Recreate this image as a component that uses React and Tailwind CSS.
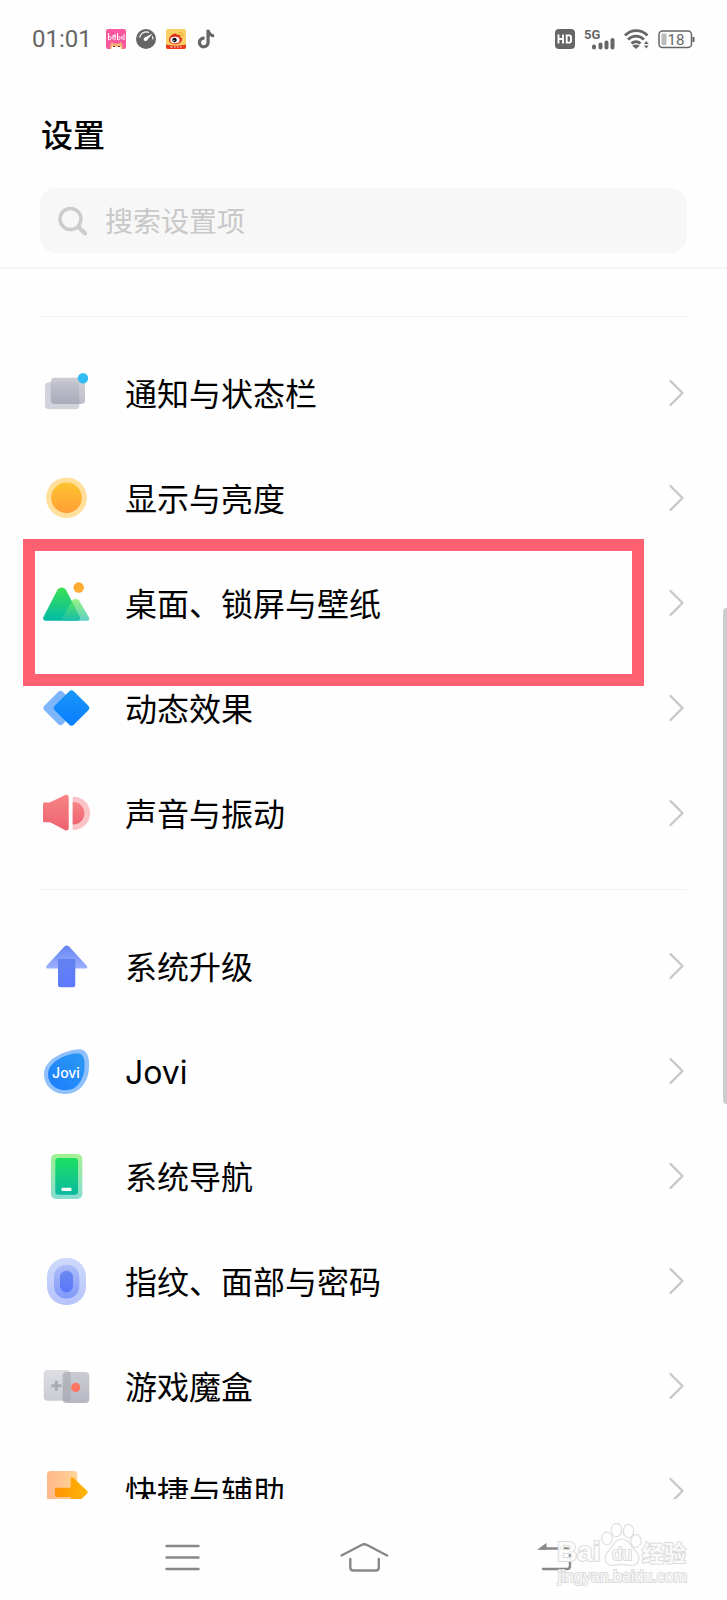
import { IoLogoTiktok } from "react-icons/io5";

function NoticeIcon() {
  return (
    <svg viewBox="0 0 52 53" className="h-[53px] w-[52px]" aria-hidden="true">
      <defs>
        <linearGradient id="notice" x1="0" y1="0" x2="0" y2="1">
          <stop offset="0" stopColor="#c6c6d0" />
          <stop offset="1" stopColor="#a6a7b6" />
        </linearGradient>
      </defs>
      <rect x="5" y="15.3" width="34.3" height="27" rx="4" fill="#d3d3dc" />
      <rect x="10.7" y="10.7" width="34.3" height="26.3" rx="4" fill="url(#notice)" opacity="0.9" />
      <path d="M39.3 19v18H41a4 4 0 0 0 4-4V14.7a4 4 0 0 0-4-4h-3.5a4 4 0 0 1 1.8 4z" fill="#fff" opacity="0.18" />
      <circle cx="43" cy="11.3" r="5.2" fill="#33bdf5" />
    </svg>
  );
}

function DisplayIcon() {
  return (
    <svg viewBox="0 0 52 53" className="h-[53px] w-[52px]" aria-hidden="true">
      <defs>
        <linearGradient id="sun" x1="0" y1="0" x2="0" y2="1">
          <stop offset="0" stopColor="#ffc42e" />
          <stop offset="1" stopColor="#ff9f37" />
        </linearGradient>
      </defs>
      <circle cx="26.5" cy="25.7" r="20.3" fill="#ffdf9a" />
      <circle cx="26.5" cy="25.7" r="15.3" fill="url(#sun)" />
    </svg>
  );
}

function WallpaperIcon() {
  return (
    <svg viewBox="0 0 52 53" className="h-[53px] w-[52px]" aria-hidden="true">
      <defs>
        <linearGradient id="hillBig" x1="0" y1="0" x2="0" y2="1">
          <stop offset="0" stopColor="#3be052" />
          <stop offset="1" stopColor="#00b9a8" />
        </linearGradient>
        <linearGradient id="hillSmall" x1="0" y1="0" x2="0" y2="1">
          <stop offset="0" stopColor="#6af04e" />
          <stop offset="1" stopColor="#22bfb2" />
        </linearGradient>
      </defs>
      <path
        d="M17.2 13.2c2-3.6 7-3.6 9 0l13.5 26.6c1 2-.2 4-2.3 4H5.8c-2.1 0-3.3-2-2.3-4z"
        fill="url(#hillBig)"
      />
      <path
        d="M31.7 24.4c1.9-3.2 6.2-3.2 8 0l9.3 16c.9 1.6-.1 3.4-2 3.4H24.5c-1.9 0-2.9-1.8-2-3.4z"
        fill="url(#hillSmall)"
        opacity="0.72"
      />
      <circle cx="38.7" cy="10.5" r="5.2" fill="#ffac33" />
    </svg>
  );
}

function MotionIcon() {
  return (
    <svg viewBox="0 0 52 53" className="h-[53px] w-[52px]" aria-hidden="true">
      <defs>
        <linearGradient id="motion" x1="0" y1="0" x2="1" y2="1">
          <stop offset="0" stopColor="#1a97f8" />
          <stop offset="1" stopColor="#087dff" />
        </linearGradient>
      </defs>
      <rect x="7.5" y="13" width="26" height="26" rx="3.5" transform="rotate(45 20.5 26)" fill="#7db5fa" />
      <rect x="18" y="12.5" width="27" height="27" rx="3.5" transform="rotate(45 31.5 26)" fill="url(#motion)" />
    </svg>
  );
}

function SoundIcon() {
  return (
    <svg viewBox="0 0 52 53" className="h-[53px] w-[52px]" aria-hidden="true">
      <defs>
        <linearGradient id="sound" x1="0" y1="0" x2="0" y2="1">
          <stop offset="0" stopColor="#f58585" />
          <stop offset="1" stopColor="#ee6170" />
        </linearGradient>
      </defs>
      <path
        d="M4.5 15.6h3.2c1 0 2-.2 2.9-.7l14.6-6.8c1.7-.8 3.5.2 3.5 2v31.2c0 1.8-1.8 2.8-3.5 2L11.6 36c-.9-.5-1.9-.7-2.9-.7H4.5c-.9 0-1.5-.6-1.5-1.5V17.1c0-.9.6-1.5 1.5-1.5z"
        fill="url(#sound)"
      />
      <path d="M32.7 9.7h.8a16.6 16.6 0 0 1 0 33.3h-.8z" fill="#fcc3c6" />
      <path d="M32.7 15h.4a11.2 11.2 0 0 1 0 22.5h-.4z" fill="url(#sound)" />
    </svg>
  );
}

function UpgradeIcon() {
  return (
    <svg viewBox="0 0 52 53" className="h-[53px] w-[52px]" aria-hidden="true">
      <defs>
        <linearGradient id="upHead" x1="0" y1="0" x2="0" y2="1">
          <stop offset="0" stopColor="#6385f1" />
          <stop offset="1" stopColor="#9cafff" />
        </linearGradient>
        <linearGradient id="upStem" x1="0" y1="0" x2="0" y2="1">
          <stop offset="0" stopColor="#6283ef" />
          <stop offset="1" stopColor="#5d79ff" />
        </linearGradient>
      </defs>
      <path
        d="M24.6 6.3c1.2-1.2 3-1.2 4.2 0l18 19.5c.9 1.1.4 2.7-1 2.7H7.6c-1.4 0-1.9-1.6-1-2.7z"
        fill="url(#upHead)"
      />
      <path d="M18 19h17.3v25.8a2.5 2.5 0 0 1-2.5 2.5H20.5a2.5 2.5 0 0 1-2.5-2.5z" fill="url(#upStem)" />
    </svg>
  );
}

function JoviIcon() {
  return (
    <svg viewBox="0 0 52 53" className="h-[53px] w-[52px]" aria-hidden="true">
      <defs>
        <linearGradient id="jovi" x1="1" y1="0" x2="0" y2="1">
          <stop offset="0" stopColor="#2c9af2" />
          <stop offset="1" stopColor="#1a7dff" />
        </linearGradient>
      </defs>
      <path
        d="M38 4.2C44.5 3.5 48 8 48.8 15c.7 6.5.2 14.5-2.8 20.5C41.5 44.500 33.500 49 25.500 49 13 49 4 40.500 4 29 4 15.500 22 5.800 38 4.200z"
        fill="#8fc0fb"
      />
      <path
        d="M36.5 8.2C41.5 7.7 43.8 11 44.4 16.500c.6 5.500.2 12-2.400 17C38.500 41.500 32.500 45.300 25.500 45.300 15.500 45.300 8 38.500 8 29.500 8 18 23 9.500 36.500 8.200z"
        fill="url(#jovi)"
      />
      <text
        x="26"
        y="33"
        textAnchor="middle"
        className="font-[family-name:Inter,sans-serif] text-[14px] font-medium"
        fill="#fff"
      >
        Jovi
      </text>
    </svg>
  );
}

function NavigationIcon() {
  return (
    <svg viewBox="0 0 52 53" className="h-[53px] w-[52px]" aria-hidden="true">
      <defs>
        <linearGradient id="phoneOut" x1="0" y1="0" x2="0" y2="1">
          <stop offset="0" stopColor="#a4f091" />
          <stop offset="1" stopColor="#85dcd2" />
        </linearGradient>
        <linearGradient id="phoneIn" x1="0" y1="0" x2="0" y2="1">
          <stop offset="0" stopColor="#1ce062" />
          <stop offset="1" stopColor="#0bb9a0" />
        </linearGradient>
      </defs>
      <rect x="11" y="4" width="31.3" height="45" rx="5" fill="url(#phoneOut)" />
      <rect x="15.3" y="8" width="22.7" height="36.7" rx="3" fill="url(#phoneIn)" />
      <rect x="21.5" y="37.7" width="10" height="3.3" rx="1" fill="#fff" />
    </svg>
  );
}

function FingerprintIcon() {
  return (
    <svg viewBox="0 0 52 53" className="h-[53px] w-[52px]" aria-hidden="true">
      <defs>
        <linearGradient id="fingerOut" x1="0" y1="0" x2="0" y2="1">
          <stop offset="0" stopColor="#cfd9fb" />
          <stop offset="1" stopColor="#b6c3fb" />
        </linearGradient>
        <linearGradient id="fingerMid" x1="0" y1="0" x2="0" y2="1">
          <stop offset="0" stopColor="#adbdf8" />
          <stop offset="1" stopColor="#829afa" />
        </linearGradient>
        <linearGradient id="fingerIn" x1="0" y1="0" x2="0" y2="1">
          <stop offset="0" stopColor="#6c89f0" />
          <stop offset="1" stopColor="#5877fb" />
        </linearGradient>
      </defs>
      <rect x="7" y="3" width="39" height="47" rx="18.5" fill="url(#fingerOut)" />
      <rect x="14" y="9.7" width="25.3" height="33.7" rx="12" fill="url(#fingerMid)" />
      <rect x="20" y="15.7" width="13" height="21.7" rx="6.5" fill="url(#fingerIn)" />
    </svg>
  );
}

function GameIcon() {
  return (
    <svg viewBox="0 0 52 53" className="h-[53px] w-[52px]" aria-hidden="true">
      <defs>
        <linearGradient id="padLeft" x1="0" y1="0" x2="0" y2="1">
          <stop offset="0" stopColor="#dddee3" />
          <stop offset="1" stopColor="#cbccd3" />
        </linearGradient>
        <linearGradient id="padRight" x1="0" y1="0" x2="0" y2="1">
          <stop offset="0" stopColor="#cbccd2" />
          <stop offset="1" stopColor="#b6b7c2" />
        </linearGradient>
      </defs>
      <rect x="3.7" y="10" width="27" height="30.7" rx="4" fill="url(#padLeft)" />
      <rect x="22.7" y="12" width="26.6" height="31" rx="4" fill="url(#padRight)" />
      <path d="M22.7 16a4 4 0 0 1 4-4h4v28.7h-8z" fill="#9fa0a9" opacity="0.45" />
      <path d="M16.3 20.7v10M11.3 25.7h10" stroke="#a9aab4" strokeWidth="3" />
      <circle cx="35.7" cy="27.4" r="4.6" fill="#fb7464" />
    </svg>
  );
}

function ShortcutIcon() {
  return (
    <svg viewBox="0 0 52 53" className="h-[53px] w-[52px]" aria-hidden="true">
      <defs>
        <linearGradient id="cutBack" x1="0" y1="0" x2="1" y2="0">
          <stop offset="0" stopColor="#ffb98c" />
          <stop offset="1" stopColor="#ffd294" />
        </linearGradient>
        <linearGradient id="cutArrow" x1="0" y1="0" x2="1" y2="0">
          <stop offset="0" stopColor="#ff9208" />
          <stop offset="1" stopColor="#ffb705" />
        </linearGradient>
      </defs>
      <rect x="7" y="6" width="30.3" height="38" rx="3.5" fill="url(#cutBack)" />
      <path
        d="M16.5 22.7h14.2v-8.9c0-1.6 1.6-2.1 2.6-1l13.7 13c.9.9.9 2 0 2.9l-13.7 13c-1 1.1-2.6.6-2.6-1V32H16.5c-.9 0-1.5-.6-1.5-1.5v-6.3c0-.9.6-1.5 1.5-1.5z"
        fill="url(#cutArrow)"
      />
    </svg>
  );
}

const groups = [
  [
    { label: "通知与状态栏", Icon: NoticeIcon },
    { label: "显示与亮度", Icon: DisplayIcon },
    { label: "桌面、锁屏与壁纸", Icon: WallpaperIcon, marked: true },
    { label: "动态效果", Icon: MotionIcon },
    { label: "声音与振动", Icon: SoundIcon },
  ],
  [
    { label: "系统升级", Icon: UpgradeIcon },
    { label: "Jovi", Icon: JoviIcon },
    { label: "系统导航", Icon: NavigationIcon },
    { label: "指纹、面部与密码", Icon: FingerprintIcon },
    { label: "游戏魔盒", Icon: GameIcon },
    { label: "快捷与辅助", Icon: ShortcutIcon },
  ],
];

function StatusBar() {
  return (
    <div className="flex h-[78px] items-center justify-between px-8 text-[#666]">
      <div className="flex items-center gap-[10px]">
        <span className="mr-1 font-[family-name:Roboto,sans-serif] text-[24px] leading-8">01:01</span>
        <svg viewBox="0 0 20 20" className="size-5" aria-hidden="true">
          <rect width="20" height="20" rx="2" fill="#f9589e" />
          <path
            d="M2.5 4v7M2.5 8c2-.8 3 0 2.5 1.6S3 11 2.5 10.5M7 7v3.5M9 5v6M6.5 6.5l3.5 1M11.5 4v7M11.5 8c2-.8 3 0 2.5 1.6s-2 1.4-2.5.9M16 7v3.5M18 5v6"
            stroke="#fff"
            strokeWidth="1"
            fill="none"
          />
          <path d="M4 20c0-4 1-6 2-7l2 1.5h4.5L15 13c1 1 2 3 2 7z" fill="#f4b073" />
          <path d="M5.5 20c0-3 1-4 2.5-3l2.2 1 2.2-1c1.6-1 2.6 0 2.6 3z" fill="#fff" />
          <path d="M7 17.5h2M12 17.5h2" stroke="#6b2d1a" strokeWidth="1" />
        </svg>
        <svg viewBox="0 0 20 20" className="size-5" aria-hidden="true">
          <circle cx="10" cy="10" r="10" fill="#666" />
          <path d="M3.5 8.5A7 7 0 0 1 13 3.5" fill="none" stroke="#fff" strokeWidth="1.3" />
          <path d="M16.5 4.5 11.3 11a1.9 1.9 0 1 1-2.6-2.5z" fill="#fff" />
          <path d="M16.2 7.2c.6 1 .8 2 .7 3.2" fill="none" stroke="#fff" strokeWidth="1.2" />
        </svg>
        <svg viewBox="0 0 20 20" className="size-5" aria-hidden="true">
          <rect width="20" height="20" rx="2" fill="#f8d064" />
          <path d="M0 15.5c6 1.5 14 1.5 20 0V18a2 2 0 0 1-2 2H2a2 2 0 0 1-2-2z" fill="#e8391d" />
          <path
            d="M3 11c0-3 3-6 6-6.5 1.5-.2 2 .5 1.8 1.5 3-.8 4 .3 3.4 2 2 .8 2.3 1.8 1.8 3.2-.8 2.5-3.5 4-6.8 4S3 13.5 3 11z"
            fill="#df321d"
          />
          <ellipse cx="9" cy="11" rx="4.6" ry="3.3" fill="#fff" />
          <circle cx="8.5" cy="11" r="2.3" fill="#111" />
          <circle cx="7.9" cy="11.6" r="0.7" fill="#fff" />
          <path
            d="M13 3.5c2.5-.5 4.3 1.5 3.7 4M13.3 5.5c1 0 1.7.6 1.5 1.7"
            fill="none"
            stroke="#f0a52c"
            strokeWidth="1"
          />
          <path d="M4.5 18h2M8 18h1.5M11 18h1.5M14 18h1.5" stroke="#fff" strokeWidth="0.9" />
        </svg>
        <IoLogoTiktok className="size-5" aria-hidden="true" />
      </div>

      <div className="flex items-center gap-[9px]">
        <svg viewBox="0 0 20 20" className="size-5" aria-hidden="true">
          <rect width="20" height="20" rx="4" fill="#666" />
          <path
            d="M3.5 5.5v9M8 5.5v9M3.5 10H8M11.7 6.4v7.2h3l1.3-1v-5.2l-1.3-1z"
            fill="none"
            stroke="#fff"
            strokeWidth="1.9"
          />
        </svg>
        <svg viewBox="0 0 31 26" className="h-[26px] w-[31px]" aria-hidden="true">
          <text x="0" y="13" className="font-[family-name:Roboto,sans-serif] text-[13px] font-bold" fill="#666">
            5G
          </text>
          <path
            d="M10 20.5v1M16.5 18.5v3M22.5 16.5v5M28.5 14v7.5"
            stroke="#666"
            strokeWidth="4"
            strokeLinecap="round"
          />
        </svg>
        <svg viewBox="0 0 25 22" className="h-[22px] w-[25px]" aria-hidden="true">
          <g fill="none" stroke="#666" strokeWidth="2.8">
            <path d="M1 7.5C7.5 1 17 1 23.5 7.5" />
            <path d="M4 11.5c4.5-4.5 11.5-4.5 16 0" />
            <path d="M7.5 15.5c2.7-2.5 6.3-2.5 9 0" />
          </g>
          <path d="M8.3 17.8c2.3-1.6 5.1-1.6 7.4 0L12 21z" fill="#666" />
          <path d="m22.3 13 2.4 3h-4.8zM22.3 20.5l2.4-3h-4.8z" fill="#666" />
        </svg>
        <svg viewBox="0 0 37 20" className="h-5 w-[37px]" aria-hidden="true">
          <rect x="1" y="2" width="32.5" height="16.5" rx="3.5" fill="none" stroke="#666" strokeWidth="1.5" />
          <rect x="3.5" y="4.5" width="5" height="11.5" rx="1" fill="#bbb" />
          <path d="M35.5 8v5" stroke="#666" strokeWidth="2" />
          <text
            x="18"
            y="16"
            textAnchor="middle"
            className="font-[family-name:Roboto,sans-serif] text-[15px]"
            fill="#666"
          >
            18
          </text>
        </svg>
      </div>
    </div>
  );
}

function SettingRow({ label, Icon, marked }) {
  return (
    <li className="relative">
      <a href="#" className="mx-10 flex h-[105px] items-center">
        <Icon />
        <span className="ml-[33px] flex-1 pt-0.5 text-[32px] leading-10 text-black">{label}</span>
        <svg viewBox="0 0 20 29" className="h-[29px] w-5" aria-hidden="true">
          <path
            d="M3.5 2 15.5 14 3.5 26"
            fill="none"
            stroke="#c8c8c8"
            strokeWidth="2.4"
            strokeLinecap="round"
            strokeLinejoin="round"
          />
        </svg>
      </a>
      {marked && (
        <div className="pointer-events-none absolute -top-3 right-[83px] -bottom-[30px] left-[23px] z-10 border-12 border-[#ff6173]" />
      )}
    </li>
  );
}

function Watermark() {
  return (
    <svg
      viewBox="0 0 137 70"
      className="pointer-events-none absolute right-[37px] bottom-3 h-[70px] w-[137px]"
      aria-hidden="true"
    >
      <g fill="#fff" fillOpacity="0.85" stroke="#dcdcdc" strokeWidth="2" className="[paint-order:stroke]">
        <text x="4" y="43" className="font-[family-name:'Liberation_Sans',sans-serif] text-[28px] font-bold">
          Bai
        </text>
        <ellipse cx="54" cy="20.5" rx="4.8" ry="6" />
        <ellipse cx="63.5" cy="12" rx="4.8" ry="6.3" />
        <ellipse cx="75.5" cy="13" rx="4.8" ry="6.3" />
        <ellipse cx="83" cy="23" rx="4.8" ry="6" />
        <path d="M69 21.5c5 0 7.5 4 10 8 3 4 6.5 6 6.5 11 0 4.5-3.5 6.5-7.5 6.5-3.5 0-5.5-1-9-1s-5.5 1-9 1c-4 0-7.5-2-7.5-6.5 0-5 3.5-7 6.5-11 2.5-4 5-8 10-8z" />
        <text x="59" y="42" className="font-[family-name:'Liberation_Sans',sans-serif] text-[18px]">
          du
        </text>
        <text x="89" y="43" className="font-[family-name:'Noto_Sans_CJK_SC',sans-serif] text-[22px] font-bold">
          经验
        </text>
        <text x="5" y="64" className="font-[family-name:'Liberation_Sans',sans-serif] text-[16px]">
          jingyan.baidu.com
        </text>
      </g>
    </svg>
  );
}

function BottomNav() {
  return (
    <nav className="flex h-[101px] shrink-0 items-center justify-between px-[154px] pt-4">
      <button type="button" aria-label="最近任务">
        <svg
          viewBox="0 0 56 35"
          className="h-[35px] w-14"
          fill="none"
          stroke="#888"
          strokeWidth="2.4"
          strokeLinecap="round"
        >
          <path d="M12.5 6h32M12.5 17.5h32M12.5 29h32" />
        </svg>
      </button>
      <button type="button" aria-label="主屏幕">
        <svg
          viewBox="0 0 56 35"
          className="h-[35px] w-14"
          fill="none"
          stroke="#888"
          strokeWidth="2.4"
          strokeLinecap="round"
          strokeLinejoin="round"
        >
          <path d="M5.5 15.5 25.5 5q2.8-1.5 5.6 0l20 10.5" />
          <path d="M14.3 19v8.5q0 3 3 3h22.5q3 0 3-3V19" />
        </svg>
      </button>
      <button type="button" aria-label="返回">
        <svg
          viewBox="0 0 56 35"
          className="h-[35px] w-14"
          fill="none"
          stroke="#888"
          strokeWidth="2.4"
          strokeLinecap="round"
        >
          <path d="M24 8.5h26q3 0 3 3V26q0 3-3 3H26" />
          <path d="m20 9.7 9.5-6.7v6.7z" fill="#888" stroke="none" />
        </svg>
      </button>
    </nav>
  );
}

export default function App() {
  return (
    <div
      lang="zh-CN"
      className="relative flex h-screen flex-col overflow-hidden bg-[#fefefe] font-[family-name:Inter,'Noto_Sans_CJK_SC',sans-serif]"
    >
      <header className="shrink-0 border-b-2 border-[#f6f6f6] pb-[14px]">
        <StatusBar />
        <h1 className="mt-[38px] mb-8 px-[41px] text-[32px] leading-10 font-medium text-black">设置</h1>
        <label className="mx-10 flex h-[65px] items-center rounded-2xl bg-[#f7f7f7] pl-[18px]">
          <svg
            viewBox="0 0 30 30"
            className="size-[30px]"
            fill="none"
            stroke="#ccc"
            strokeLinecap="round"
            aria-hidden="true"
          >
            <circle cx="12.5" cy="13" r="10.5" strokeWidth="3.5" />
            <path d="m20.5 21 6.5 6.5" strokeWidth="4" />
          </svg>
          <input
            type="search"
            aria-label="搜索设置项"
            placeholder="搜索设置项"
            className="ml-[17px] min-w-0 flex-1 bg-transparent pt-0.5 text-[28px] leading-10 text-black outline-none placeholder:text-[#c8c8c8]"
          />
        </label>
      </header>

      <main className="min-h-0 flex-1 overflow-y-auto pt-[47px] [scrollbar-width:none]">
        {groups.map((rows, i) => (
          <section key={i}>
            <hr className="mx-10 border-[#f3f3f3]" />
            <ul className="pt-6 pb-[23px]">
              {rows.map((row) => (
                <SettingRow key={row.label} {...row} />
              ))}
            </ul>
          </section>
        ))}
      </main>

      {/* scroll position indicator */}
      <div className="absolute top-[38%] right-0 h-[31%] w-1 rounded-l bg-[#ccc]" />

      <BottomNav />
      <Watermark />
    </div>
  );
}
